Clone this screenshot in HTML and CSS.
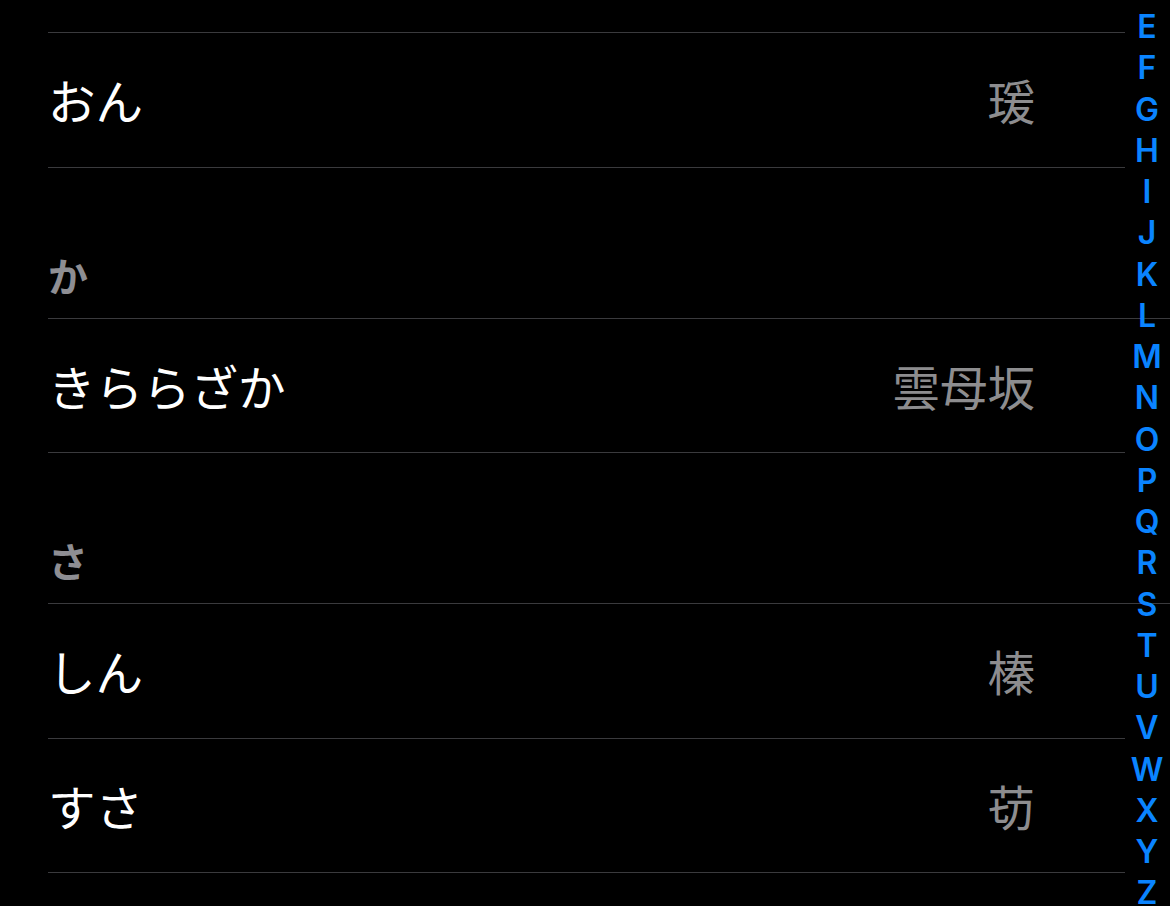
FILE: index.html
```html
<!DOCTYPE html>
<html lang="ja">
<head>
  <meta charset="UTF-8">
  <meta name="viewport" content="width=device-width, initial-scale=1.0">
  <title>Contacts</title>
  <link rel="stylesheet" href="styles.css">
</head>
<body>
  <div class="screen">
    <div class="list">
      <div class="row row-top"></div>

      <div class="row">
        <span class="row-title">おん</span>
        <span class="row-detail">瑗</span>
      </div>

      <div class="section-header"><span>か</span></div>

      <div class="row">
        <span class="row-title">きららざか</span>
        <span class="row-detail">雲母坂</span>
      </div>

      <div class="section-header"><span>さ</span></div>

      <div class="row">
        <span class="row-title">しん</span>
        <span class="row-detail">榛</span>
      </div>
      <div class="row">
        <span class="row-title">すさ</span>
        <span class="row-detail">苆</span>
      </div>
    </div>

    <ul class="index-bar">
      <li>E</li><li>F</li><li>G</li><li>H</li><li>I</li><li>J</li>
      <li>K</li><li>L</li><li>M</li><li>N</li><li>O</li><li>P</li>
      <li>Q</li><li>R</li><li>S</li><li>T</li><li>U</li><li>V</li>
      <li>W</li><li>X</li><li>Y</li><li>Z</li>
    </ul>
  </div>
</body>
</html>
```

FILE: styles.css
```css
* {
  margin: 0;
  padding: 0;
  box-sizing: border-box;
}

body {
  background-color: #000;
  color: #fff;
  font-family: 'Noto Sans CJK JP', 'Noto Sans', sans-serif;
  width: 1170px;
  height: 906px;
  overflow: hidden;
}

.screen {
  position: relative;
  height: 906px;
  overflow: hidden;
}

.list {
  padding-left: 48px;
}

.row {
  display: flex;
  justify-content: space-between;
  align-items: center;
  height: 134.5px;
  margin-right: 45px;
  padding-right: 90px;
  border-bottom: 1px solid #3a3a3d;
}

.row-top {
  height: 33px;
}

.row-title {
  font-size: 47.5px;
  line-height: 1;
}

.row-detail {
  font-size: 47.5px;
  line-height: 1;
  color: #8d8d8f;
}

.section-header {
  display: flex;
  align-items: flex-end;
  height: 151px;
  padding-bottom: 23px;
  border-bottom: 1px solid #3a3a3d;
  font-size: 40px;
  font-weight: bold;
  line-height: 1;
  color: #8e8e93;
}

.index-bar {
  position: absolute;
  top: 6px;
  right: 6px;
  width: 34px;
  list-style: none;
  text-align: center;
  font-family: Inter, 'Noto Sans', sans-serif;
  font-size: 32px;
  font-weight: 600;
  line-height: 41.25px;
  color: #0a84ff;
}
```
